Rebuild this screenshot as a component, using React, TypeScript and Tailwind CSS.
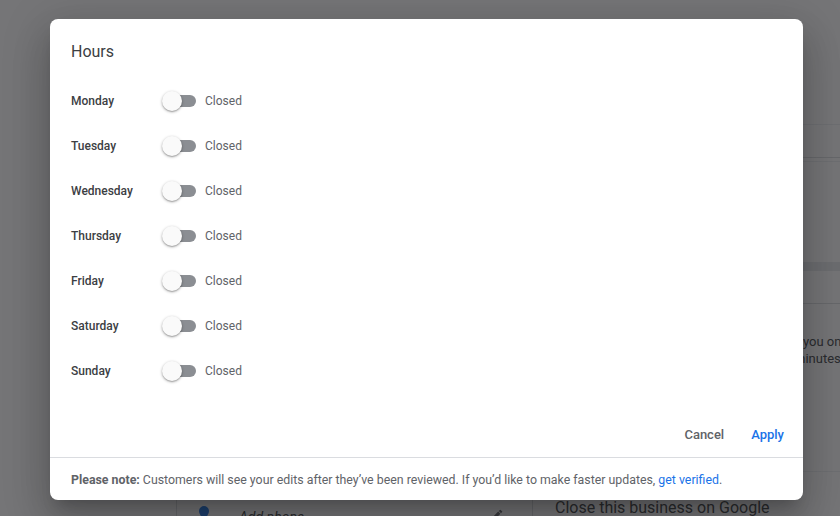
import React from 'react';

const days = ['Monday', 'Tuesday', 'Wednesday', 'Thursday', 'Friday', 'Saturday', 'Sunday'];

function Toggle() {
  return (
    <div className="relative w-[34px] h-[20px] flex items-center">
      <div className="ml-[2px] w-[32px] h-[12px] rounded-full bg-[#8b8e93]" />
      {/* thumb sits over the track */}
      <div className="absolute left-0 top-0 w-[20px] h-[20px] rounded-full bg-[#fafafa] shadow-[0_1px_3px_rgba(0,0,0,0.35),0_1px_1px_rgba(0,0,0,0.14)]" />
    </div>
  );
}

function BackgroundPage() {
  return (
    <div className="flex w-full h-[516px] bg-white text-[#3c4043]">
      <div className="w-[176px] shrink-0 h-full" />
      <div className="w-[357px] shrink-0 h-full flex flex-col justify-end">
        <div className="h-[40px] border-l border-r border-t border-[#dadce0] flex items-end gap-[30px] pl-[22px] pr-[28px] overflow-hidden">
          <svg width="10" height="14" viewBox="0 0 10 14" className="mb-[-4px] shrink-0">
            <path d="M5 0C2.2 0 0 2.2 0 5c0 3.8 5 9 5 9s5-5.2 5-9c0-2.8-2.2-5-5-5z" fill="#1a73e8" />
          </svg>
          <span className="italic text-[14px] leading-[18px] mb-[-10px] flex-1">Add phone</span>
          <svg width="14" height="14" viewBox="0 0 24 24" className="mb-[-6px] shrink-0">
            <path d="M3 17.25V21h3.75L17.81 9.94l-3.75-3.75L3 17.25zM20.71 7.04a1 1 0 000-1.41l-2.34-2.34a1 1 0 00-1.41 0l-1.83 1.83 3.75 3.75 1.83-1.83z" fill="#5f6368" />
          </svg>
        </div>
      </div>
      <div className="flex-1 min-w-0 h-full flex flex-col overflow-hidden">
        <div className="h-[125px] shrink-0 border-b border-[#eceff1]" />
        <div className="h-[33px] shrink-0 border-b border-[#dadce0]" />
        <div className="h-[4px] shrink-0 border-b border-[#eceff1]" />
        <div className="h-[100px] shrink-0" />
        <div className="h-[9px] shrink-0 bg-[#e8eaed]" />
        <div className="h-[33px] shrink-0 border-b border-[#dadce0]" />
        <div className="h-[29px] shrink-0" />
        <div className="pl-[270px] text-[13px] leading-[17px] text-[#3c4043] whitespace-nowrap">
          <div>you on</div>
          <div className="ml-[-9px]">minutes</div>
        </div>
        <div className="flex-1" />
        <div className="h-[45px] shrink-0 border-t border-[#eceff1] flex items-end pl-[22px]">
          <span className="text-[16px] leading-[20px] mb-[-2px] text-[#3c4043] whitespace-nowrap">Close this business on Google</span>
        </div>
      </div>
    </div>
  );
}

export default function App() {
  return (
    <div className="relative w-[840px] h-[516px] overflow-hidden" style={{ fontFamily: 'Roboto, "Liberation Sans", sans-serif' }}>
      <BackgroundPage />
      {/* scrim + dialog */}
      <div className="absolute inset-0 bg-[rgba(32,33,36,0.62)] pt-[19px] pl-[50px]">
        <div className="w-[753px] h-[481px] bg-white rounded-[8px] shadow-[0_11px_15px_-7px_rgba(0,0,0,0.2),0_24px_38px_3px_rgba(0,0,0,0.14),0_9px_46px_8px_rgba(0,0,0,0.12)] flex flex-col">
          <div className="pt-[21px] pl-[21px] text-[16px] leading-[24px] text-[#3c4043]">Hours</div>
          <div className="mt-[14px] flex flex-col pl-[21px]">
            {days.map((d) => (
              <div key={d} className="h-[45px] flex items-center">
                <div className="w-[91px] text-[12px] font-medium text-[#3c4043]">{d}</div>
                <Toggle />
                <span className="ml-[9px] text-[12px] text-[#5f6368]">Closed</span>
              </div>
            ))}
          </div>
          <div className="mt-[24px] flex justify-end gap-[11px] pr-[11px]">
            <button className="h-[36px] px-[8px] text-[13px] font-medium text-[#5f6368]">Cancel</button>
            <button className="h-[36px] px-[8px] text-[13px] font-medium text-[#1a73e8]">Apply</button>
          </div>
          <div className="mt-auto border-t border-[#dadce0] h-[43px] pt-[2px] flex items-center pl-[21px] text-[12.35px] text-[#5f6368] whitespace-nowrap">
            <span>
              <span className="font-bold">Please note:</span> Customers will see your edits after they’ve been reviewed. If you’d like to make faster updates,{' '}
              <span className="text-[#1a73e8]">get verified</span>.
            </span>
          </div>
        </div>
      </div>
    </div>
  );
}
